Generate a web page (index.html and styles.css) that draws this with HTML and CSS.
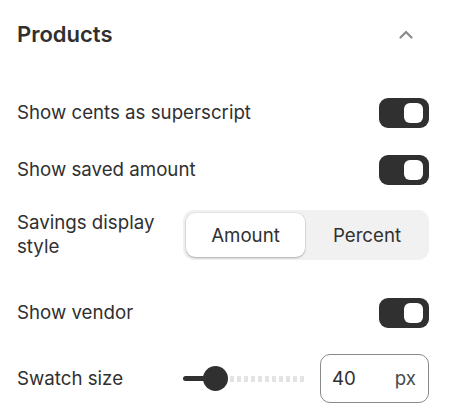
FILE: index.html
```html
<!DOCTYPE html>
<html>
<head>
<meta charset="utf-8">
<link rel="stylesheet" href="styles.css">
</head>
<body>
<div class="panel">
  <div class="header">
    <h2 class="title">Products</h2>
    <svg class="chevron" width="20" height="20" viewBox="0 0 20 20"><path d="M4.5 12.5 L10 7 L15.5 12.5" fill="none" stroke="#8a8a8a" stroke-width="2.2" stroke-linecap="round" stroke-linejoin="round"/></svg>
  </div>
  <div class="row r1">
    <span class="label">Show cents as superscript</span>
    <span class="toggle"><span class="knob"></span></span>
  </div>
  <div class="row r2">
    <span class="label">Show saved amount</span>
    <span class="toggle"><span class="knob"></span></span>
  </div>
  <div class="row r3">
    <span class="label narrow">Savings display style</span>
    <div class="segment">
      <span class="seg active">Amount</span>
      <span class="seg">Percent</span>
    </div>
  </div>
  <div class="row r4">
    <span class="label">Show vendor</span>
    <span class="toggle"><span class="knob"></span></span>
  </div>
  <div class="row r5">
    <span class="label">Swatch size</span>
    <div class="controls">
      <div class="slider">
        <span class="fill"></span>
        <span class="thumb"></span>
        <span class="rest"></span>
      </div>
      <div class="input">
        <span class="val">40</span>
        <span class="unit">px</span>
      </div>
    </div>
  </div>
</div>
</body>
</html>
```
FILE: styles.css
```css
html, body { margin: 0; padding: 0; background: #fff; }
body { font-family: Inter, "Noto Sans", sans-serif; color: #303030; }
.panel { width: 449px; box-sizing: border-box; padding: 0 20px 0 17px; display: flex; flex-direction: column; }
.header { height: 68px; display: flex; align-items: center; justify-content: space-between; }
.title { margin: 0; font-size: 22px; font-weight: 600; letter-spacing: 0; }
.chevron { margin-right: 13px; margin-top: 1px; }
.row { display: flex; align-items: center; justify-content: space-between; font-size: 18.7px; }
.label { line-height: 24px; }
.narrow { width: 160px; }
.r1 { margin-top: 30px; }
.r2 { margin-top: 27px; }
.r3 { margin-top: 25px; }
.r4 { margin-top: 38px; }
.r5 { margin-top: 26px; }
.toggle { width: 50px; height: 30px; border-radius: 9px; background: #303030; box-sizing: border-box; padding: 5px 6px; display: flex; justify-content: flex-end; }
.knob { width: 19px; height: 20px; border-radius: 6px; background: #fff; }
.segment { width: 246px; height: 50px; box-sizing: border-box; padding: 3px; border-radius: 11px; background: #f1f1f1; display: flex; }
.seg { flex: 0 0 124px; display: flex; align-items: center; justify-content: center; font-size: 18.7px; }
.seg.active { flex: 0 0 119px; background: #fff; border-radius: 9px; box-shadow: 0 1px 2px rgba(0,0,0,0.25), 0 0 0 0.5px rgba(0,0,0,0.08); }
.controls { display: flex; align-items: center; gap: 13px; }
.slider { width: 124px; height: 26px; display: flex; align-items: center; }
.fill { width: 22px; height: 5px; background: #303030; border-radius: 3px 0 0 3px; }
.thumb { width: 25px; height: 25px; border-radius: 50%; background: #303030; margin-left: -2px; }
.rest { flex: 1; height: 6px; margin-left: 2px; background: repeating-linear-gradient(90deg, #e3e3e3 0 4px, transparent 4px 7px); border-radius: 0 3px 3px 0; }
.input { width: 109px; height: 49px; box-sizing: border-box; border: 1px solid #8a8a8a; border-radius: 10px; display: flex; align-items: center; justify-content: space-between; padding: 0 12px 0 11px; font-size: 18.7px; }
.unit { color: #4a4a4a; }
```
